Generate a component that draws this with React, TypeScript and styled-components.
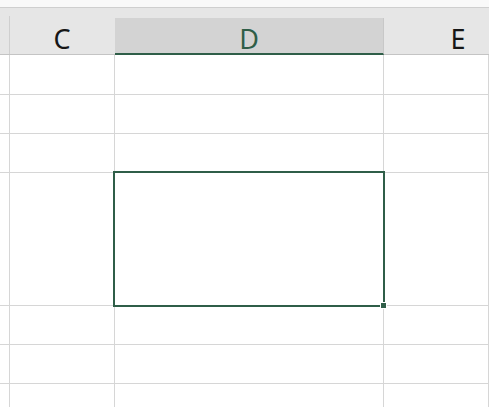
import styled, { createGlobalStyle } from "styled-components";

const GlobalStyle = createGlobalStyle`
  html, body {
    margin: 0;
    padding: 0;
    background: #fff;
    overflow: hidden;
  }
  body {
    font-family: "Noto Sans", "Liberation Sans", sans-serif;
  }
`;

const GRID = "#d6d6d6";
const GREEN = "#2f5e48";
const COLS = "10px 105px 269px 1fr";

// shift: the last column runs past the window edge, so its letter sits further right
const columns = [
  { label: "", active: false, shift: 0 },
  { label: "C", active: false, shift: 0 },
  { label: "D", active: true, shift: 0 },
  { label: "E", active: false, shift: 44 },
];

const rows = [40, 39, 39, 133, 39, 39, 39];
const SELECTED_ROW = 3;

export default function App() {
  return (
    <>
      <GlobalStyle />
      <Sheet>
        <TopStrip />
        <HeaderRow>
          {columns.map((c, i) => (
            <HeaderCell key={i} active={c.active} first={i === 0} shift={c.shift}>
              {c.label}
            </HeaderCell>
          ))}
        </HeaderRow>
        {rows.map((h, r) => (
          <Row key={r} style={{ height: h }}>
            {columns.map((c, i) => (
              <Cell key={i}>
                {r === SELECTED_ROW && c.active && (
                  <Selection>
                    <FillHandle />
                  </Selection>
                )}
              </Cell>
            ))}
          </Row>
        ))}
      </Sheet>
    </>
  );
}

const Sheet = styled.div`
  width: 489px;
  height: 407px;
  overflow: hidden;
  display: flex;
  flex-direction: column;
`;

const TopStrip = styled.div`
  flex: 0 0 7px;
  background: #f9f9f9;
  border-bottom: 1px solid #cfcfcf;
`;

const HeaderRow = styled.div`
  flex: 0 0 46px;
  display: grid;
  grid-template-columns: ${COLS};
  background: #e6e6e6;
  border-bottom: 1px solid #c4c4c4;
`;

const HeaderCell = styled.div<{ active: boolean; first: boolean; shift: number }>`
  position: relative;
  display: flex;
  align-items: center;
  justify-content: center;
  padding-top: ${({ active }) => (active ? "5px" : "15px")};
  padding-left: ${({ shift }) => shift}px;
  margin-top: ${({ active }) => (active ? "10px" : "0")};
  margin-bottom: ${({ active }) => (active ? "-1px" : "0")};
  background: ${({ active }) => (active ? "#d3d3d3" : "transparent")};
  border-right: 1px solid ${({ active }) => (active ? "#c8c8c8" : "transparent")};
  border-bottom: ${({ active }) => (active ? `2px solid ${GREEN}` : "none")};
  color: ${({ active }) => (active ? GREEN : "#161616")};
  font-size: 27px;
  font-weight: 400;
  line-height: 1;
  &::after {
    content: "";
    position: absolute;
    right: -1px;
    top: 8px;
    bottom: 0;
    width: 1px;
    background: ${({ first }) => (first ? "#cfcfcf" : "transparent")};
  }
`;

const Row = styled.div`
  flex: 0 0 auto;
  display: grid;
  grid-template-columns: ${COLS};
  box-sizing: border-box;
  border-bottom: 1px solid ${GRID};
`;

const Cell = styled.div`
  position: relative;
  border-right: 1px solid ${GRID};
`;

const Selection = styled.div`
  position: absolute;
  left: -2px;
  top: -2px;
  right: -2px;
  bottom: -2px;
  border: 2px solid ${GREEN};
  z-index: 2;
`;

const FillHandle = styled.div`
  position: absolute;
  right: -4px;
  bottom: -4px;
  width: 5px;
  height: 5px;
  background: ${GREEN};
  border: 1px solid #fff;
`;
